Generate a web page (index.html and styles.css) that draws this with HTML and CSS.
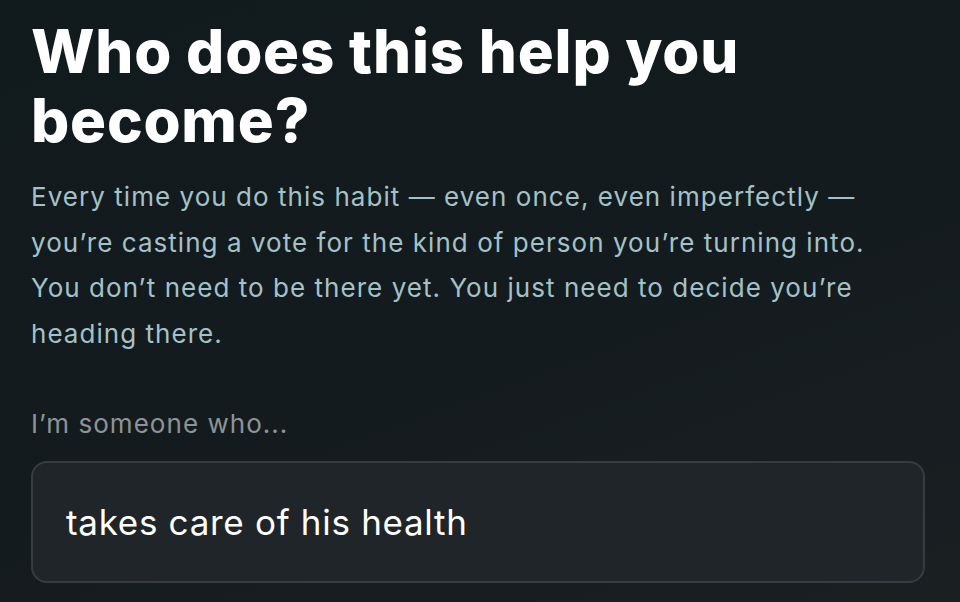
FILE: index.html
```html
<!DOCTYPE html>
<html>
  <head>
    <title>Identity</title>
    <meta charset="utf-8">
    <meta name="viewport" content="width=device-width, initial-scale=1">
    <link rel="stylesheet" href="styles.css">
  </head>
<body>
<div class="screen">
  <h1 class="title">Who does this help you become?</h1>
  <p class="intro">Every time you do this habit — even once, even imperfectly — you’re casting a vote for the kind of person you’re turning into. You don’t need to be there yet. You just need to decide you’re heading there.</p>
  <label class="label" for="identity">I’m someone who...</label>
  <input id="identity" class="field" type="text" value="takes care of his health" spellcheck="false">
</div>
</body>
</html>
```

FILE: styles.css
```css
html, body {
  height: 100%;
}
body {
  margin: 0;
  font-family: Inter, "Noto Sans", sans-serif;
  background: linear-gradient(160deg, #111a1d 0%, #141b1e 55%, #1a1f22 100%);
  color: #fff;
  overflow: hidden;
}
.screen {
  display: flex;
  flex-direction: column;
  padding: 17px 35px 0 31px;
}
.title {
  margin: 0;
  font-size: 60px;
  font-weight: 800;
  line-height: 69px;
  letter-spacing: 0.8px;
}
.intro {
  max-width: 870px;
  margin: 19px 0 0;
  font-size: 26px;
  line-height: 45.7px;
  letter-spacing: 0.04em;
  color: #a3c2c8;
}
.label {
  margin-top: 52px;
  font-size: 26px;
  line-height: 30px;
  letter-spacing: 0.04em;
  color: #8e9395;
}
.field {
  margin-top: 22px;
  height: 122px;
  box-sizing: border-box;
  padding: 0 33px;
  border: 2px solid #363c3f;
  border-radius: 16px;
  background: #1f2528;
  color: #fff;
  font-family: inherit;
  font-size: 35px;
  letter-spacing: 0.02em;
  outline: none;
}
```
